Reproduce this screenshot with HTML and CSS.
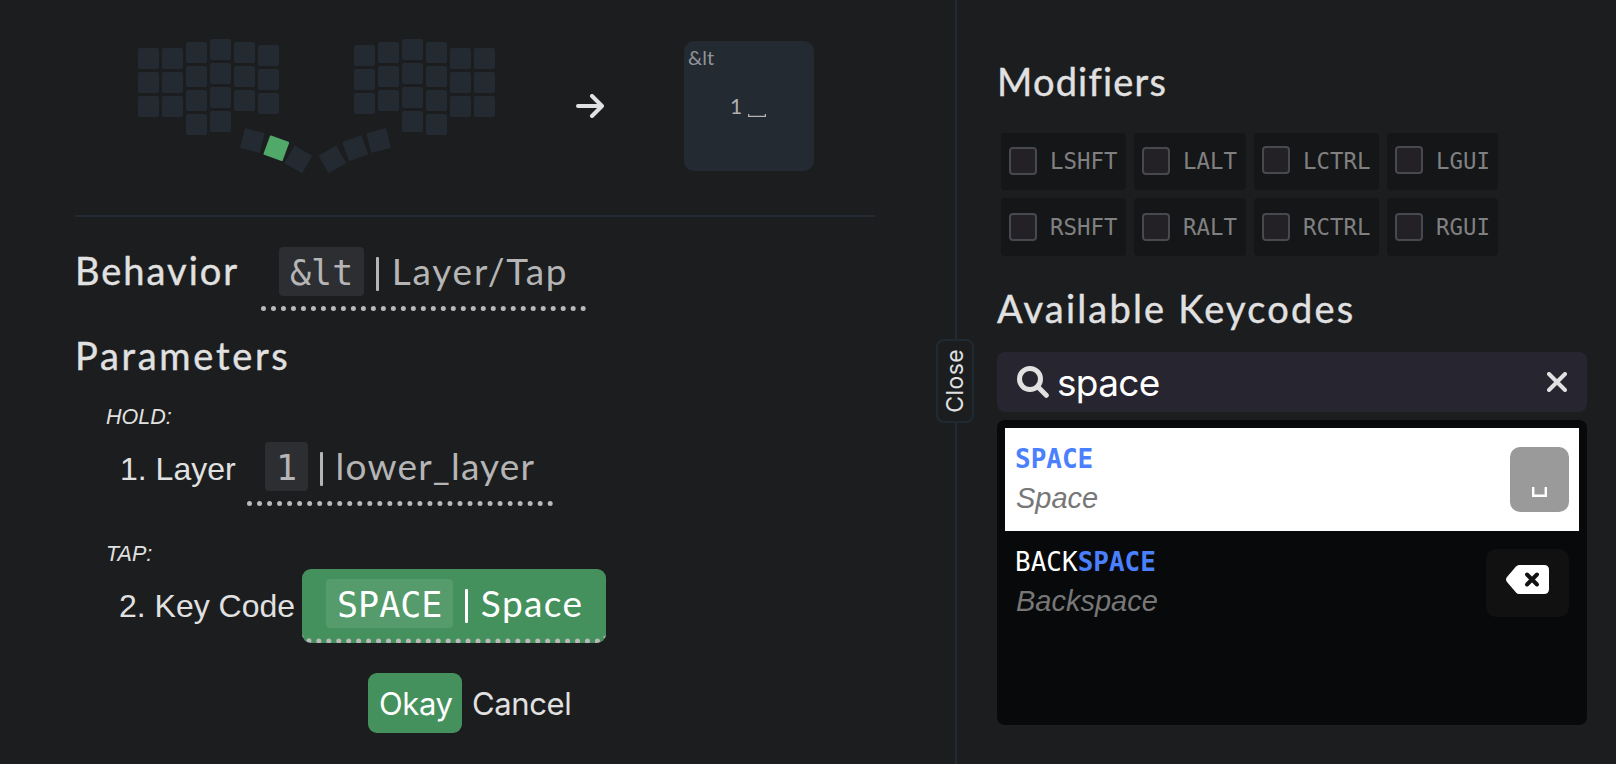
FILE: index.html
```html
<!DOCTYPE html>
<html lang="en">
<head>
<meta charset="utf-8">
<title>Key binding editor</title>
<link rel="stylesheet" href="styles.css">
</head>
<body>
<div class="app">
  <main class="editor">
    <section class="preview">
      <svg class="keyboard" width="360" height="136" viewBox="138 38 360 136">
        <defs><rect id="k" width="21" height="21" rx="2"/><rect id="t" x="-10.2" y="-10.2" width="20.4" height="20.4" rx="1"/></defs>
        <g class="keys">
          <use href="#k" x="138" y="48"/><use href="#k" x="138" y="72"/><use href="#k" x="138" y="96"/>
          <use href="#k" x="162" y="48"/><use href="#k" x="162" y="72"/><use href="#k" x="162" y="96"/>
          <use href="#k" x="186" y="42"/><use href="#k" x="186" y="66"/><use href="#k" x="186" y="90"/><use href="#k" x="186" y="114"/>
          <use href="#k" x="210" y="39"/><use href="#k" x="210" y="63"/><use href="#k" x="210" y="87"/><use href="#k" x="210" y="111"/>
          <use href="#k" x="234" y="42"/><use href="#k" x="234" y="66"/><use href="#k" x="234" y="90"/>
          <use href="#k" x="258" y="45"/><use href="#k" x="258" y="69"/><use href="#k" x="258" y="93"/>
          <use href="#k" x="354" y="45"/><use href="#k" x="354" y="69"/><use href="#k" x="354" y="93"/>
          <use href="#k" x="378" y="42"/><use href="#k" x="378" y="66"/><use href="#k" x="378" y="90"/>
          <use href="#k" x="402" y="39"/><use href="#k" x="402" y="63"/><use href="#k" x="402" y="87"/><use href="#k" x="402" y="111"/>
          <use href="#k" x="426" y="42"/><use href="#k" x="426" y="66"/><use href="#k" x="426" y="90"/><use href="#k" x="426" y="114"/>
          <use href="#k" x="450" y="48"/><use href="#k" x="450" y="72"/><use href="#k" x="450" y="96"/>
          <use href="#k" x="474" y="48"/><use href="#k" x="474" y="72"/><use href="#k" x="474" y="96"/>
          <use href="#t" transform="translate(252.3 140.5) rotate(15)"/>
          <use href="#t" class="active" transform="translate(276.3 148.3) rotate(20)"/>
          <use href="#t" transform="translate(298.4 159.4) rotate(30)"/>
          <use href="#t" transform="translate(332.4 159.4) rotate(-30)"/>
          <use href="#t" transform="translate(355.3 148.3) rotate(-20)"/>
          <use href="#t" transform="translate(378.7 140.5) rotate(-15)"/>
        </g>
      </svg>
      <svg class="arrow" width="28" height="24" viewBox="0 0 28 24"><path d="M2 12H25M16 2L26 12L16 22"/></svg>
      <div class="keycap">
        <span class="keycap-behavior">&amp;lt</span>
        <div class="keycap-params"><span>1</span><svg width="18" height="3" viewBox="0 0 18 3"><path d="M.6 0V2.4H17.4V0"/></svg></div>
      </div>
    </section>

    <section class="row behavior">
      <h2 class="title">Behavior</h2>
      <button class="value"><code>&amp;lt</code><i class="bar"></i><span class="name n-behavior">Layer/Tap</span></button>
    </section>
    <h2 class="title parameters">Parameters</h2>
    <div class="hint hold">HOLD:</div>
    <div class="row layer"><span class="label">1. Layer</span>
      <button class="value"><code>1</code><i class="bar"></i><span class="name n-layer">lower_layer</span></button>
    </div>
    <div class="hint tap">TAP:</div>
    <div class="row keycode"><span class="label l-key">2. Key Code</span>
      <button class="value selected"><code>SPACE</code><i class="bar"></i><span class="name n-space">Space</span></button>
    </div>
    <div class="actions"><button class="btn okay">Okay</button><button class="btn cancel">Cancel</button></div>
  </main>

  <aside class="sidebar">
    <button class="close"><span>Close</span></button>
    <h2 class="title t-mod">Modifiers</h2>
    <div class="modifiers">
      <label class="mod"><i class="box"></i>LSHFT</label><label class="mod"><i class="box"></i>LALT</label><label class="mod"><i class="box high"></i>LCTRL</label><label class="mod"><i class="box high"></i>LGUI</label>
      <label class="mod"><i class="box"></i>RSHFT</label><label class="mod"><i class="box"></i>RALT</label><label class="mod"><i class="box"></i>RCTRL</label><label class="mod"><i class="box"></i>RGUI</label>
    </div>
    <h2 class="title t-codes">Available Keycodes</h2>
    <div class="search">
      <svg class="glass" width="32" height="32" viewBox="0 0 32 32"><circle cx="13" cy="13" r="10.5"/><path d="M20.5 20.5L29.3 29.3"/></svg>
      <span class="query">space</span>
      <svg class="clear" width="20" height="20" viewBox="0 0 20 20"><path d="M2 2L18 18M18 2L2 18"/></svg>
    </div>
    <ul class="results">
      <li class="result current">
        <div><div class="code"><b>SPACE</b></div><div class="desc">Space</div></div>
        <div class="cap cap-space"><svg width="15" height="10" viewBox="0 0 15 10"><path d="M1.2 0V8.8H13.8V0"/></svg></div>
      </li>
      <li class="result">
        <div><div class="code">BACK<b>SPACE</b></div><div class="desc">Backspace</div></div>
        <div class="cap cap-back"><svg width="43" height="29" viewBox="0 0 43 29"><path class="back" d="M13 0H38Q43 0 43 5V24Q43 29 38 29H13Q11.500 29 10 27.500L1 17Q-1 14.500 1 12L10 1.500Q11.500 0 13 0Z"/><path class="cross" d="M21 9.500L31 19.500M31 9.500L21 19.500"/></svg></div>
      </li>
    </ul>
  </aside>
</div>
</body>
</html>
```
FILE: styles.css
```css
* { box-sizing: border-box; }
body { margin: 0; background: #1c1d1f; color: #e1e1e1; font-family: "Liberation Sans", Arial, sans-serif; }
button { background: none; border: 0; padding: 0; margin: 0; color: inherit; font: inherit; text-align: left; }
h2, ul { margin: 0; padding: 0; list-style: none; }
svg { display: block; flex: none; }
.app { display: flex; width: 1616px; height: 764px; overflow: hidden; }
.editor { width: 955px; padding: 0 80px 0 75px; }
.preview { display: flex; height: 217px; border-bottom: 2px solid #232a32; padding: 38px 0 0 63px; }
.keys { fill: #232a32; }
.keys .active { fill: #50a869; }
.arrow { margin: 56px 0 0 78px; fill: none; stroke: #e1e1e1; stroke-width: 4; stroke-linecap: round; stroke-linejoin: round; }
.keycap { width: 130px; height: 130px; margin: 3px 0 0 80px; border-radius: 10px; background: #232a32; color: #b0b0b0; font: 400 20px/24px Lato, sans-serif; }
.keycap-behavior { display: block; padding: 4px 0 0 4px; height: 29px; color: #909498; }
.keycap-params { display: flex; align-items: flex-end; padding-left: 46px; height: 47px; }
.keycap-params span { width: 18px; height: 23px; font-size: 21px; }
.keycap-params svg { fill: none; stroke: #b5b5b5; stroke-width: 1.2; }

.title { font: 400 38px/44px Lato, sans-serif; white-space: nowrap; -webkit-text-stroke: .4px currentColor; }
.row { display: flex; align-items: baseline; height: 74px; }
.behavior { margin-top: 20px; }
.behavior .title { width: 186px; letter-spacing: 2px; }
.value { display: flex; align-items: baseline; height: 74px; padding: 10px 18px; border-bottom: 5px dotted #b9b9b9; color: #b5b5b5; white-space: nowrap; }
.value code { height: 49px; padding: 3px 11px 0; border-radius: 4px; background: #2d2e32; font: 35px/46px "DejaVu Sans Mono", monospace; }
.bar { width: 2.500px; height: 34px; margin: 0 0 0 12px; align-self: flex-start; position: relative; top: 10px; background: currentColor; border-radius: 1px; }
.name { margin-left: 13px; font: 400 37px/44px Lato, sans-serif; }
.n-behavior { width: 176px; letter-spacing: 1.800px; }
.n-layer { width: 199px; letter-spacing: 1.200px; }
.n-space { width: 101px; letter-spacing: 1.400px; }
.selected { padding: 10px 24px; border-radius: 9px; background: #45915d; color: #fff; }
.selected code { background: #559b6c; }
.parameters { height: 50px; margin-top: 22px; letter-spacing: 2.700px; }
.hint { margin-left: 31px; height: 26px; font-size: 21.500px; line-height: 26px; font-style: italic; }
.hold { margin-top: 21px; height: 28px; }
.layer { margin: 0 0 0 45px; }
.label { width: 127px; font-size: 32px; white-space: nowrap; }
.l-key { width: 183px; }
.tap { margin-top: 35px; }
.keycode { margin: 2px 0 0 44px; }
.actions { display: flex; margin: 30px 0 0 293px; }
.btn { height: 60px; padding: 1px 11px 0; border-radius: 9px; font: 31px/60px Inter, sans-serif; letter-spacing: -.4px; }
.okay { width: 94px; background: #45915d; color: #fff; }
.cancel { padding-left: 10px; }

.sidebar { position: relative; width: 661px; border-left: 2px solid #232a32; padding: 59px 29px 0 40px; }
.close { position: absolute; left: -21px; top: 339px; width: 38px; height: 84px; border: 2px solid #202a32; border-radius: 8px; background: #1c1d1f; display: flex; align-items: center; justify-content: center; }
.close span { writing-mode: vertical-rl; transform: rotate(180deg); font: 23px/28px Inter, sans-serif; letter-spacing: .4px; }
.modifiers { display: grid; grid-template-columns: 125px 112px 125px 111px; grid-template-rows: 57px 58px; gap: 8px; margin: 30px 0 0 4px; }
.mod { display: flex; align-items: center; padding-left: 8px; border-radius: 4px; background: #151618; color: #808080; font: 22.400px/30px "DejaVu Sans Mono", monospace; }
.mod:nth-child(-n+4) { padding-bottom: 1px; }
.box { width: 28px; height: 28px; margin-right: 13px; border: 2px solid #48484f; border-radius: 4px; background: #232126; }
.high { margin-bottom: 2px; }
.t-mod { letter-spacing: 1.200px; }
.t-codes { height: 44px; margin-top: 30px; letter-spacing: 2.200px; }
.search { display: flex; align-items: center; height: 60px; margin-top: 22px; padding: 0 20px; border-radius: 8px; background: #27252f; }
.glass, .clear { fill: none; stroke: #e1e1e1; stroke-linecap: round; }
.glass { stroke-width: 5; }
.clear { stroke-width: 4; }
.query { flex: 1; padding: 1px 0 0 8px; color: #fff; font: 37px/59px Inter, sans-serif; letter-spacing: -.7px; }
.results { height: 305px; margin-top: 8px; padding: 8px; border-radius: 8px; background: #08090b; }
.result { display: flex; justify-content: space-between; height: 103px; padding: 10px; color: #fff; }
.current { background: #fff; }
.code { height: 40px; padding-top: 1px; font: 26px/40px "DejaVu Sans Mono", monospace; }
.code b { color: #4a80fd; }
.desc { color: #777; font-size: 29px; line-height: 40px; font-style: italic; padding-left: 1px; }
.cap { display: flex; justify-content: center; border-radius: 10px; }
.cap svg { fill: none; stroke: #fff; stroke-width: 2.400; }
.cap-space { width: 59px; height: 65px; margin-top: 9px; padding-top: 40px; background: #9a9a9a; }
.cap-back { width: 83px; height: 68px; margin-top: 8px; padding-top: 16px; background: #111; }
.cap .back { fill: #fff; stroke: none; }
.cap .cross { stroke: #111; stroke-width: 4; stroke-linecap: round; }
```
